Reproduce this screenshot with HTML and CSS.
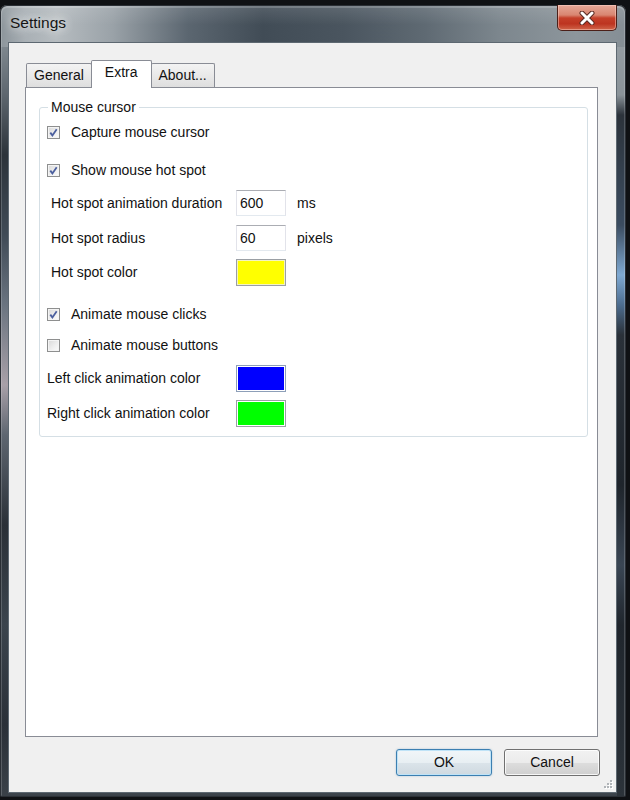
FILE: index.html
```html
<!DOCTYPE html>
<html>
<head>
<meta charset="utf-8">
<title>Settings</title>
<link rel="stylesheet" href="styles.css">
</head>
<body>
<div class="window">
  <div class="titlebar">
    <span class="title">Settings</span>
    <div class="close">
      <svg width="20" height="14" viewBox="0 0 20 14">
        <path d="M5 2 L15 12 M15 2 L5 12" stroke="#5a2a22" stroke-width="5" stroke-linecap="round" fill="none"/>
        <path d="M5 2 L15 12 M15 2 L5 12" stroke="#ffffff" stroke-width="3" stroke-linecap="round" fill="none"/>
      </svg>
    </div>
  </div>
  <div class="client">
    <div class="tabs">
      <div class="tab">General</div>
      <div class="tab active">Extra</div>
      <div class="tab">About...</div>
    </div>
    <div class="panel">
      <fieldset class="group">
        <legend>Mouse cursor</legend>
        <div class="row mt4"><span class="cb"><svg width="11" height="11" viewBox="0 0 11 11"><path d="M2.3 5.6 L4.4 8.4 L8.7 2.2" stroke="#4b5f9e" stroke-width="1.8" fill="none"/></svg></span><span class="cbl">Capture mouse cursor</span></div>
        <div class="row mt12"><span class="cb"><svg width="11" height="11" viewBox="0 0 11 11"><path d="M2.3 5.6 L4.4 8.4 L8.7 2.2" stroke="#4b5f9e" stroke-width="1.8" fill="none"/></svg></span><span class="cbl">Show mouse hot spot</span></div>
        <div class="row mt7"><span class="lbl indent">Hot spot animation duration</span><span class="field">600</span><span class="unit">ms</span></div>
        <div class="row mt9"><span class="lbl indent">Hot spot radius</span><span class="field">60</span><span class="unit">pixels</span></div>
        <div class="row mt8"><span class="lbl indent">Hot spot color</span><span class="swatch yellow"></span></div>
        <div class="row mt16"><span class="cb"><svg width="11" height="11" viewBox="0 0 11 11"><path d="M2.3 5.6 L4.4 8.4 L8.7 2.2" stroke="#4b5f9e" stroke-width="1.8" fill="none"/></svg></span><span class="cbl">Animate mouse clicks</span></div>
        <div class="row mt5"><span class="cb"></span><span class="cbl">Animate mouse buttons</span></div>
        <div class="row mt7"><span class="lbl">Left click animation color</span><span class="swatch blue"></span></div>
        <div class="row mt9"><span class="lbl">Right click animation color</span><span class="swatch green"></span></div>
      </fieldset>
    </div>
    <div class="buttons">
      <div class="btn default">OK</div>
      <div class="btn">Cancel</div>
    </div>
    <svg class="grip" width="10" height="10" viewBox="0 0 10 10">
      <g fill="#ffffff">
        <rect x="8" y="2" width="2" height="2"/><rect x="5" y="5" width="2" height="2"/><rect x="8" y="5" width="2" height="2"/>
        <rect x="2" y="8" width="2" height="2"/><rect x="5" y="8" width="2" height="2"/><rect x="8" y="8" width="2" height="2"/>
      </g>
      <g fill="#b0b4b8">
        <rect x="7" y="1" width="2" height="2"/><rect x="4" y="4" width="2" height="2"/><rect x="7" y="4" width="2" height="2"/>
        <rect x="1" y="7" width="2" height="2"/><rect x="4" y="7" width="2" height="2"/><rect x="7" y="7" width="2" height="2"/>
      </g>
    </svg>
  </div>
</div>
</body>
</html>
```

FILE: styles.css
```css
html, body {
  margin: 0;
  padding: 0;
}
body {
  width: 630px;
  height: 800px;
  overflow: hidden;
  background: #0f1114;
  font-family: "Liberation Sans", Arial, sans-serif;
  font-size: 14px;
  color: #000;
  padding-top: 5px;
  box-sizing: border-box;
}
.window {
  position: relative;
  width: 626px;
  height: 792px;
  box-sizing: border-box;
  border-radius: 7px 7px 2px 2px;
  padding: 0 9px 4px 8px;
  display: flex;
  flex-direction: column;
  box-shadow: inset 0 0 0 1px #2a2f35, inset 0 1px 0 2px rgba(255,255,255,0.18);
  background:
    linear-gradient(to bottom, transparent 0, transparent 42px, #7e878e 42px, #5d666e 90px, #2c333a 150px, #404b56 230px, #6a7480 300px, #a8a0a8 380px, #5e6670 430px, #2a3037 520px, #3b444d 620px, #2a3038 720px, #3a4148 792px) left top / 8px 100% no-repeat,
    linear-gradient(to bottom, transparent 0, transparent 42px, #949ca2 42px, #8a9399 90px, #2c333b 110px, #3b4c60 220px, #7fa9d2 270px, #4c6c8e 300px, #2a3139 330px, #1f252c 480px, #3a4654 560px, #20262d 620px, #2c333a 792px) right top / 9px 100% no-repeat,
    linear-gradient(to bottom, transparent 0, transparent 780px, #4e5760 780px, #363d44 792px) left top / 100% 100% no-repeat,
    linear-gradient(to bottom, rgba(255,255,255,0.12) 0, rgba(255,255,255,0) 20px),
    linear-gradient(90deg, #8b949a 0, #a9b0b5 4%, #b6bcc0 9%, #9aa2a8 18%, #5b6670 30%, #414c56 42%, #4a555f 55%, #5f6a73 68%, #7d878e 80%, #8d969c 92%, #858e95 100%);
}
.titlebar {
  height: 37px;
  flex: none;
  display: flex;
  justify-content: space-between;
  align-items: flex-start;
}
.title {
  margin-left: 2px;
  padding-top: 9px;
  line-height: 17px;
  font-size: 15.5px;
  color: #151515;
  text-shadow: 0 0 8px rgba(255,255,255,0.9), 0 0 14px rgba(255,255,255,0.6);
}
.close {
  width: 60px;
  height: 26px;
  box-sizing: border-box;
  border: 1px solid #4b1f18;
  border-top: none;
  border-radius: 0 0 5px 5px;
  background: linear-gradient(to bottom, #e6a898 0%, #d98671 40%, #c5402a 52%, #bd3420 75%, #d0654a 100%);
  box-shadow: inset 0 0 0 1px rgba(255,220,210,0.45);
  display: flex;
  align-items: center;
  justify-content: center;
}
.client {
  position: relative;
  flex: 1;
  background: #f0f0f0;
  border: 1px solid #5d6871;
  padding: 17px 18px 16px 16px;
  display: flex;
  flex-direction: column;
}
.tabs {
  display: flex;
  align-items: flex-end;
  height: 27px;
  padding-left: 1px;
  flex: none;
}
.tab {
  height: 24px;
  box-sizing: border-box;
  border: 1px solid #898c95;
  border-bottom: none;
  border-radius: 2px 2px 0 0;
  padding: 0 7px;
  line-height: 22px;
  background: linear-gradient(to bottom, #f3f3f3 0%, #e9e9e9 50%, #dedede 100%);
  color: #111;
}
.tab + .tab {
  margin-left: -1px;
}
.tab.active {
  position: relative;
  z-index: 1;
  height: 28px;
  margin-bottom: -1px;
  padding: 3px 13px 0 13px;
  line-height: 17px;
  background: #ffffff;
}
.panel {
  flex: 1;
  background: #ffffff;
  border: 1px solid #898c95;
}
.group {
  margin: 11px 9px 0 13px;
  padding: 0 0 10px 7px;
  border: 1px solid #d5dfe5;
  border-radius: 3px;
  box-shadow: inset 1px 1px 0 #ffffff;
}
.group legend {
  margin-left: 1px;
  padding: 0 3px;
  line-height: 16px;
  color: #111;
}
.row {
  height: 26px;
  display: flex;
  align-items: center;
}
.mt4 { margin-top: 4px; }
.mt5 { margin-top: 5px; }
.mt7 { margin-top: 7px; }
.mt8 { margin-top: 8px; }
.mt9 { margin-top: 9px; }
.mt12 { margin-top: 12px; }
.mt16 { margin-top: 16px; }
.cb {
  width: 13px;
  height: 13px;
  box-sizing: border-box;
  border: 1px solid #8e8f8f;
  background: linear-gradient(135deg, #d8d8d8 0%, #f0f0f0 60%, #fbfbfb 100%);
  box-shadow: inset 0 0 0 1px #f4f4f4;
  display: flex;
  align-items: center;
  justify-content: center;
  margin-right: 11px;
}
.cb svg { display: block; }
.cbl { color: #111; }
.lbl {
  width: 189px;
  color: #111;
}
.lbl.indent {
  margin-left: 4px;
  width: 185px;
}
.field {
  width: 50px;
  height: 26px;
  box-sizing: border-box;
  border: 1px solid #e2e3ea;
  border-top-color: #abadb3;
  border-bottom-color: #e3e9ef;
  background: #fff;
  padding-left: 3px;
  line-height: 24px;
  color: #111;
}
.unit {
  margin-left: 11px;
  color: #111;
}
.swatch {
  width: 50px;
  height: 27px;
  box-sizing: border-box;
  border: 1px solid #9a9fa5;
  box-shadow: inset 0 0 0 1px #ffffff;
}
.yellow { background: #ffff00; box-shadow: inset 0 0 0 1px #f4f4c0; }
.blue { background: #0000ff; border-color: #8d9fb8; }
.green { background: #00ff00; }
.buttons {
  flex: none;
  display: flex;
  justify-content: flex-end;
  gap: 12px;
  margin-top: 12px;
  margin-right: -2px;
}
.btn {
  width: 96px;
  height: 27px;
  box-sizing: border-box;
  border: 1px solid #707070;
  border-radius: 3px;
  background: linear-gradient(to bottom, #f2f2f2 0%, #ebebeb 50%, #dddddd 51%, #cfcfcf 100%);
  box-shadow: inset 0 0 0 1px rgba(255,255,255,0.8);
  text-align: center;
  line-height: 25px;
  color: #111;
}
.btn.default {
  border-color: #3c7fb1;
  background: linear-gradient(to bottom, #f1f6f9 0%, #e8eff3 50%, #dbe4ea 51%, #cfd9e0 100%);
  box-shadow: inset 0 0 0 1px #bfe3f7, 0 0 2px rgba(60,127,177,0.4);
}
.grip {
  position: absolute;
  right: 3px;
  bottom: 3px;
}
```
